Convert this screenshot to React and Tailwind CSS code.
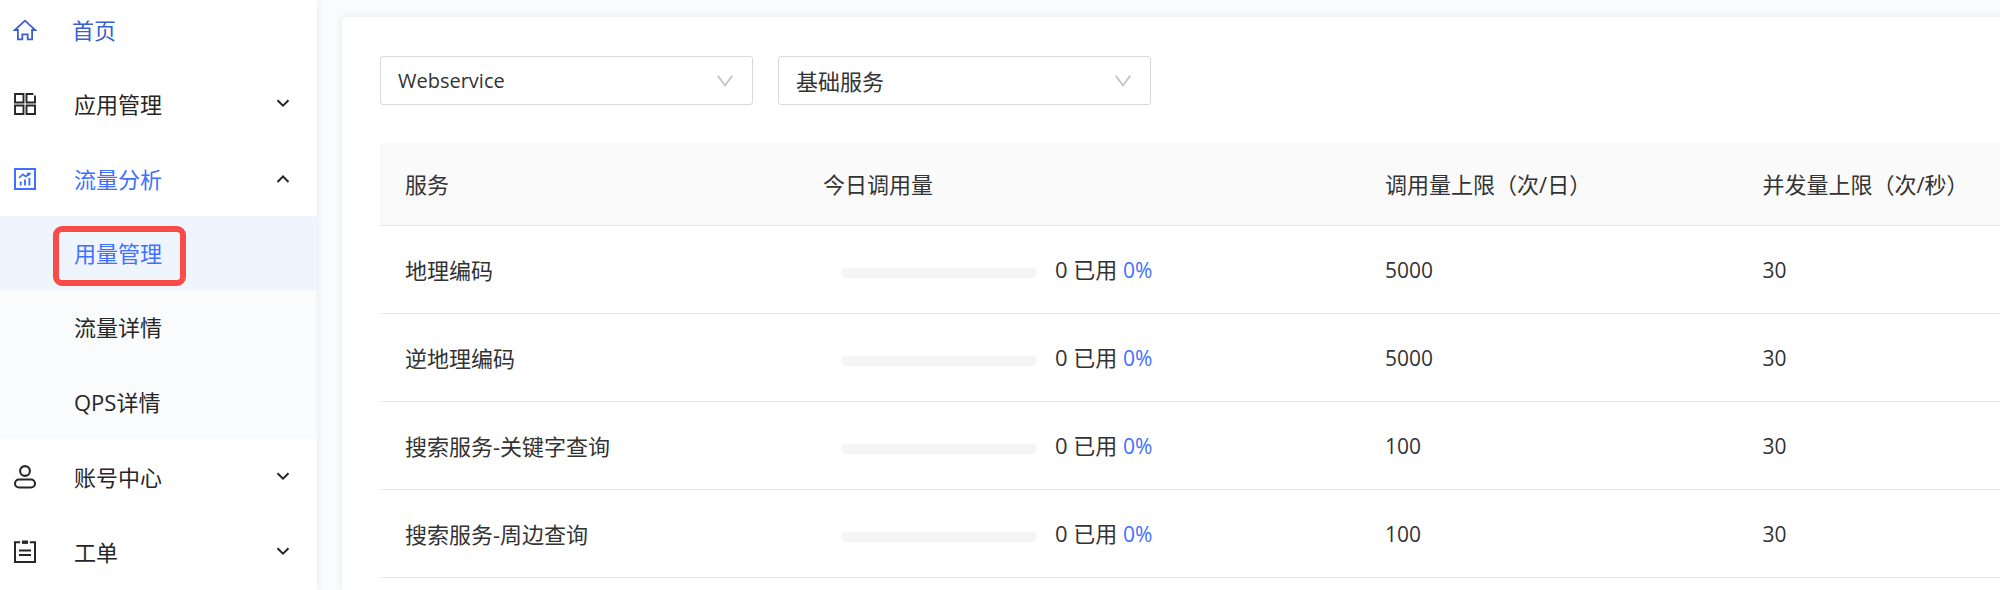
import React, { useState } from 'react';

const HomeIcon = () => (
  <svg viewBox="0 0 24 24" className="size-6" fill="none" stroke="currentColor" strokeWidth="1.8" aria-hidden="true">
    <path d="M12 2.7 L1.8 12 H4.9 V21.4 H9.3 V16.4 H14.7 V21.4 H19.1 V12 H22.2 Z" />
  </svg>
);

const AppsIcon = () => (
  <svg viewBox="0 0 24 24" className="size-6" fill="none" stroke="currentColor" strokeWidth="1.9" aria-hidden="true">
    <path d="M2 2 H10.5 V10.5 H2 Z M20.4 2 H13.5 V10.5 H22 V3.4 M2 13.5 H10.5 V22 H2 Z M13.5 13.5 H22 V22 H13.5 Z" />
  </svg>
);

const ChartIcon = () => (
  <svg viewBox="0 0 24 24" className="size-6" fill="none" stroke="currentColor" strokeWidth="2" aria-hidden="true">
    <path d="M2 2 H22 V22 H2 Z" />
    <path d="M7.7 14.5 V18.6 M12 12.5 V18.6 M16.4 11 V18.6" strokeWidth="1.9" />
    <path d="M6 10.8 L10 7.4 L12.8 9.6 L16.2 6.4" strokeWidth="1.7" />
    <path d="M13.6 5.8 H18.6 L15.6 9.4 Z" fill="currentColor" stroke="none" />
  </svg>
);

const UserIcon = () => (
  <svg viewBox="0 0 24 24" className="size-6" fill="none" stroke="currentColor" strokeWidth="2.1" aria-hidden="true">
    <circle cx="12" cy="6" r="4.9" />
    <rect x="2" y="14.5" width="20" height="8" rx="4" />
  </svg>
);

const TicketIcon = () => (
  <svg viewBox="0 0 24 24" className="size-6" fill="none" stroke="currentColor" strokeWidth="2" aria-hidden="true">
    <path d="M7.2 2.2 H2 V22 H22 V2.2 H16.8" />
    <path d="M9 2.2 H15" strokeWidth="3.4" />
    <path d="M6 10.5 H18 M6 15 H18" />
  </svg>
);

const Caret = ({ up }) => (
  <svg viewBox="0 0 14 10" className="mr-[27px] h-[10px] w-[14px]" fill="none" stroke="currentColor" strokeWidth="2" aria-hidden="true">
    <path d={up ? 'M1.5 8 L7 2.5 L12.5 8' : 'M1.5 1.2 L7 6.7 L12.5 1.2'} />
  </svg>
);

function MenuRow({ icon, label, active, open, onToggle }) {
  return (
    <button
      type="button"
      aria-expanded={open}
      onClick={onToggle}
      className="flex h-[75px] w-full items-center pl-[13px] text-left"
    >
      <span className={active ? 'flex flex-1 items-center text-[#4070ff]' : 'flex flex-1 items-center'}>
        <span className="mr-[37px]">{icon}</span>
        <span>{label}</span>
      </span>
      <Caret up={open} />
    </button>
  );
}

function Picker({ label, options, latin }) {
  return (
    <div className={latin ? 'relative w-[373px] text-[20px]' : 'relative w-[373px]'}>
      <select
        aria-label={label}
        className="h-[49px] w-full appearance-none rounded-[3px] border border-[#d9d9d9] bg-white pl-[17px] pr-12 text-[#333333]"
      >
        {options.map((o) => (
          <option key={o}>{o}</option>
        ))}
      </select>
      <svg viewBox="0 0 16 12" className="pointer-events-none absolute right-5 top-[19px] h-3 w-4" fill="none" stroke="#bfbfbf" strokeWidth="1.7" aria-hidden="true">
        <path d="M0.8 0.8 L8 10.4 L15.2 0.8" />
      </svg>
    </div>
  );
}

const services = [
  { name: '地理编码', used: 0, daily: 5000, qps: 30 },
  { name: '逆地理编码', used: 0, daily: 5000, qps: 30 },
  { name: '搜索服务-关键字查询', used: 0, daily: 100, qps: 30 },
  { name: '搜索服务-周边查询', used: 0, daily: 100, qps: 30 },
];

function Usage({ used, limit }) {
  const percent = Math.round((used / limit) * 100);
  return (
    <div className="flex items-center pl-[18px]">
      <div
        role="progressbar"
        aria-label="今日调用量"
        aria-valuenow={percent}
        aria-valuemin={0}
        aria-valuemax={100}
        className="mr-[18px] mt-[6px] h-[10px] w-[196px] overflow-hidden rounded-full bg-[#f5f5f5]"
      >
        <div className="h-full bg-[#4070ff]" style={{ width: `${percent}%` }} />
      </div>
      <span className="whitespace-pre">
        {used} 已用 <span className="text-[21px] text-[#4070ff]">{percent}%</span>
      </span>
    </div>
  );
}

export default function App() {
  const [open, setOpen] = useState({ apps: false, traffic: true, account: false, ticket: false });
  const toggle = (key) => () => setOpen((s) => ({ ...s, [key]: !s[key] }));

  return (
    <div className="flex h-screen overflow-hidden bg-[#f9fbfd] font-['Open_Sans','Noto_Sans_CJK_SC',sans-serif] text-[22px] leading-[32px] text-[#262626]">
      <nav className="w-[317px] shrink-0 bg-white shadow-[0_0_8px_rgba(0,0,0,0.08)]">
        <a href="#home" className="flex h-[66px] items-center pb-[6px] pl-[13px] text-[#3a60d0]">
          <span className="mr-[35px]"><HomeIcon /></span>
          <span>首页</span>
        </a>
        <MenuRow icon={<AppsIcon />} label="应用管理" open={open.apps} onToggle={toggle('apps')} />
        <MenuRow icon={<ChartIcon />} label="流量分析" active open={open.traffic} onToggle={toggle('traffic')} />
        {open.traffic && (
          <div className="grid h-[223px] grid-rows-3 bg-[#f9fbfd]">
            <a href="#usage" className="relative flex items-center bg-[#eff5ff] pl-[74px] text-[#4070ff]">
              用量管理
              <span className="absolute left-[53px] top-[10px] h-[60px] w-[133px] rounded-[9px] border-[6px] border-[#f94b47]" />
            </a>
            <a href="#traffic" className="flex items-center pl-[74px]">流量详情</a>
            <a href="#qps" className="flex items-center pl-[74px]">QPS详情</a>
          </div>
        )}
        <MenuRow icon={<UserIcon />} label="账号中心" open={open.account} onToggle={toggle('account')} />
        <MenuRow icon={<TicketIcon />} label="工单" open={open.ticket} onToggle={toggle('ticket')} />
      </nav>

      <main className="min-w-0 flex-1 pl-[25px] pt-[17px]">
        <section className="h-full rounded-tl-[4px] bg-white pl-[38px] pt-[39px] shadow-[0_0_8px_rgba(0,0,0,0.08)]">
          <div className="flex gap-[25px]">
            <Picker label="服务类型" options={['Webservice']} latin />
            <Picker label="服务分类" options={['基础服务']} />
          </div>
          <table className="mt-[38px] w-full table-fixed border-separate border-spacing-0 text-left text-[#333333]">
            <colgroup>
              <col className="w-[25.8%]" />
              <col className="w-[34.7%]" />
              <col className="w-[23.3%]" />
              <col />
            </colgroup>
            <thead>
              <tr className="h-[83px]">
                {['服务', '今日调用量', '调用量上限（次/日）', '并发量上限（次/秒）'].map((h) => (
                  <th key={h} className="whitespace-nowrap border-b border-[#e8e8e8] bg-[#fafafa] pl-[25px] font-normal">{h}</th>
                ))}
              </tr>
            </thead>
            <tbody>
              {services.map((s) => (
                <tr key={s.name} className="h-[88px]">
                  <td className="border-b border-[#e8e8e8] pl-[25px]">{s.name}</td>
                  <td className="border-b border-[#e8e8e8] pl-[25px]"><Usage used={s.used} limit={s.daily} /></td>
                  <td className="border-b border-[#e8e8e8] pl-[25px] text-[21px]">{s.daily}</td>
                  <td className="border-b border-[#e8e8e8] pl-[25px] text-[21px]">{s.qps}</td>
                </tr>
              ))}
            </tbody>
          </table>
        </section>
      </main>
    </div>
  );
}
